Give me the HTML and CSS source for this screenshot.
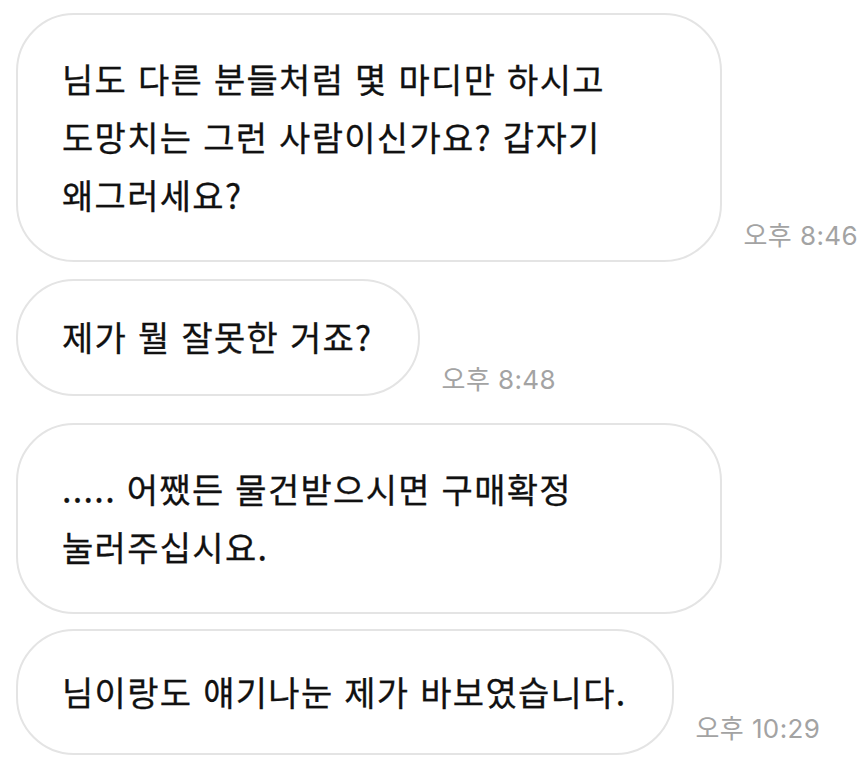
FILE: index.html
```html
<!DOCTYPE html>
<html lang="ko">
<head>
<meta charset="utf-8">
<link rel="stylesheet" href="styles.css">
</head>
<body>
<div class="chat">
  <div class="row row-1">
    <div class="bubble wide b1">님도 다른 분들처럼 몇 마디만 하시고<br>도망치는 그런 사람이신가요? 갑자기<br>왜그러세요?</div>
    <span class="time">오후 8:46</span>
  </div>
  <div class="row row-2">
    <div class="bubble b2">제가 뭘 잘못한 거죠?</div>
    <span class="time time-low">오후 8:48</span>
  </div>
  <div class="row row-3">
    <div class="bubble wide b3">..... 어쨌든 물건받으시면 구매확정<br>눌러주십시요.</div>
  </div>
  <div class="row row-4">
    <div class="bubble b4">님이랑도 얘기나눈 제가 바보였습니다.</div>
    <span class="time">오후 10:29</span>
  </div>
</div>
</body>
</html>
```

FILE: styles.css
```css
html, body {
  margin: 0;
  padding: 0;
  background: #ffffff;
}

body {
  width: 858px;
  height: 772px;
  overflow: hidden;
  font-family: "Noto Sans CJK KR", "Noto Sans", sans-serif;
}

.chat {
  display: flex;
  flex-direction: column;
  padding: 13px 0 0 16px;
}

.row {
  display: flex;
  align-items: flex-end;
}

.row-2 { margin-top: 17px; }
.row-3 { margin-top: 27px; }
.row-4 { margin-top: 15px; }

.bubble {
  box-sizing: border-box;
  border: 2px solid #e4e4e4;
  border-radius: 58px;
  padding: 0 45px 0 44px;
  font-size: 34px;
  font-weight: 400;
  letter-spacing: 1.3px;
  line-height: 58px;
  color: #111111;
  white-space: nowrap;
  -webkit-text-stroke: 0.3px #111111;
}

.wide {
  width: 706px;
}

.b1 { padding-top: 35px; padding-bottom: 36px; }
.b2 { padding-top: 27px; padding-bottom: 28px; }
.b3 { padding-top: 35px; padding-bottom: 36px; }
.b4 { padding-top: 32px; padding-bottom: 32px; }

.time {
  margin-left: 22px;
  margin-bottom: 12px;
  font-family: "Inter", "Noto Sans CJK KR", sans-serif;
  font-size: 26px;
  letter-spacing: 0.4px;
  line-height: 28px;
  color: #a3a3a3;
  white-space: nowrap;
}

.time-low {
  margin-bottom: 2px;
}
```
